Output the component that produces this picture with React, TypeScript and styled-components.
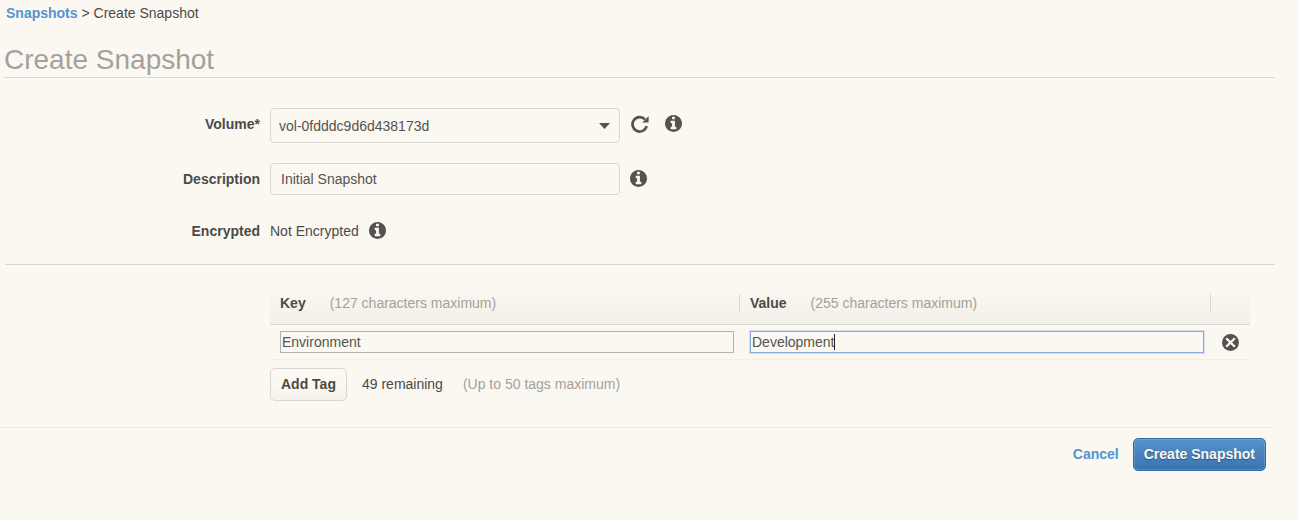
import React, { useEffect, useLayoutEffect, useRef, useState } from "react";
import styled, { createGlobalStyle, css } from "styled-components";

const color = {
  page: "#fbf8f1",
  text: "#545350",
  strong: "#4b4a47",
  muted: "#a3a19b",
  line: "#dad7d0",
  faint: "#f0ede6",
  link: "#5294d2",
};

const GlobalStyle = createGlobalStyle`
  *, *::before, *::after { box-sizing: border-box; }
  body {
    margin: 0;
    background: ${color.page};
    color: ${color.strong};
    font: 14px/18px "Liberation Sans", Arial, sans-serif;
  }
  button, input, select { font: inherit; color: inherit; }
`;

const Page = styled.div`
  padding-right: 23px;
`;

const Section = styled.div`
  padding-left: 5px;
`;

const Breadcrumb = styled.nav`
  padding: 4px 0 0 6px;
`;

const TextLink = styled.a`
  color: ${color.link};
  font-weight: bold;
  text-decoration: none;
`;

const Title = styled.h1`
  margin: 20px 0 0 4px;
  border-bottom: 1px solid ${color.line};
  color: ${color.muted};
  font-size: 28px;
  font-weight: normal;
  line-height: 35px;
`;

const Form = styled.div`
  display: flex;
  flex-direction: column;
  gap: 20px;
  padding: 30px 0 17px;
  border-bottom: 1px solid ${color.line};
`;

const Row = styled.div`
  display: flex;
  align-items: flex-start;
  line-height: 32px;
`;

const labelStyle = css`
  flex: none;
  width: 255px;
  margin-right: 10px;
  font-weight: bold;
  text-align: right;
`;

const Label = styled.label`
  ${labelStyle}
`;

const LabelText = styled.span`
  ${labelStyle}
`;

const SelectBox = styled.div`
  position: relative;
  width: 350px;
`;

const Select = styled.select`
  display: block;
  width: 100%;
  height: 35px;
  padding: 0 30px 0 8px;
  border: 1px solid ${color.line};
  border-radius: 4px;
  background: transparent;
  color: ${color.text};
  appearance: none;
`;

const Arrow = styled.svg`
  position: absolute;
  top: 15px;
  right: 10px;
  pointer-events: none;
`;

const TextInput = styled.input`
  width: 350px;
  height: 32px;
  padding: 0 10px;
  border: 1px solid ${color.line};
  border-radius: 4px;
  background: transparent;
  color: ${color.text};
`;

const IconButton = styled.button<{ $gap?: number }>`
  display: flex;
  align-items: center;
  height: 32px;
  margin: 0 0 0 ${(p) => p.$gap ?? 0}px;
  padding: 0 0 1px;
  border: 0;
  background: none;
  color: ${color.text};
  cursor: pointer;
`;

const TagArea = styled.div`
  padding: 20px 25px 26px 265px;
`;

const Table = styled.table`
  width: 100%;
  table-layout: fixed;
  border-collapse: separate;
  border-spacing: 0;
`;

const ActionCol = styled.col`
  width: 40px;
`;

const HeadCell = styled.th`
  padding: 9px 0 12px;
  border-bottom: 1px solid ${color.line};
  background: linear-gradient(${color.page} 10%, #f2efe8);
  text-align: left;
`;

const HeadText = styled.div<{ $rule?: "left" | "right" }>`
  display: flex;
  gap: 24px;
  height: 18px;
  padding-left: 10px;
  ${(p) => p.$rule && `border-${p.$rule}: 1px solid ${color.line};`}
`;

const Hint = styled.span`
  color: ${color.muted};
  font-weight: normal;
`;

const Cell = styled.td`
  padding: 6px 6px 6px 10px;
  border-bottom: 1px solid ${color.faint};
`;

const ActionCell = styled(Cell)`
  padding-left: 12px;
`;

const TagField = styled.div`
  position: relative;
`;

const TagInput = styled.input`
  display: block;
  width: 100%;
  height: 22px;
  padding: 0 1px;
  border: 1px solid #b5b3ae;
  background: transparent;
  color: ${color.text};
  caret-color: transparent;

  &:focus {
    border-color: #8ba9da;
    outline: 1px solid #cfdff0;
    outline-offset: 0;
  }
`;

const Caret = styled.span`
  position: absolute;
  top: 3px;
  width: 1px;
  height: 16px;
  background: #222;
  pointer-events: none;
`;

const RemoveButton = styled(IconButton)`
  height: 22px;
  padding: 0;
`;

const TagActions = styled.div`
  display: flex;
  align-items: baseline;
  margin-top: 8px;
`;

const Button = styled.button<{ $primary?: boolean }>`
  height: 33px;
  padding: 0 10px 1px;
  border: 1px solid ${color.line};
  border-radius: 5px;
  background: linear-gradient(${color.page} 50%, #f5f2eb);
  font-weight: bold;
  white-space: nowrap;
  cursor: pointer;

  ${(p) =>
    p.$primary &&
    css`
      border-color: #356ba5;
      background: linear-gradient(#5591cb, #3a74b0);
      box-shadow: inset 0 0 0 1px rgba(255, 255, 255, 0.15);
      color: #fbf8f1;
      text-shadow: 0 1px 1px rgba(0, 0, 0, 0.35);
    `}
`;

const Remaining = styled.span`
  margin: 0 20px 0 15px;
`;

const Footer = styled.footer`
  display: flex;
  justify-content: flex-end;
  align-items: baseline;
  gap: 14px;
  padding: 10px 9px 10px 0;
  border-top: 1px solid ${color.faint};
`;

const InfoIcon = () => (
  <svg width="17" height="17" viewBox="128 128 1536 1536" fill="currentColor" aria-hidden="true">
    <path d="M1152 1376v-160q0-14-9-23t-23-9h-96v-512q0-14-9-23t-23-9h-320q-14 0-23 9t-9 23v160q0 14 9 23t23 9h96v320h-96q-14 0-23 9t-9 23v160q0 14 9 23t23 9h448q14 0 23-9t9-23zM1024 480v-160q0-14-9-23t-23-9h-192q-14 0-23 9t-9 23v160q0 14 9 23t23 9h192q14 0 23-9t9-23zM1664 896q0 209-103 385.5t-279.5 279.5-385.5 103-385.5-103-279.5-279.5-103-385.5 103-385.5 279.5-279.5 385.5-103 385.5 103 279.5 279.5 103 385.5z" />
  </svg>
);

const RefreshIcon = () => (
  <svg width="18" height="18" viewBox="0 0 18 18" aria-hidden="true">
    <path d="M15.7 11.2A7.2 7.2 0 1 1 14 4.4" fill="none" stroke="currentColor" strokeWidth="2.7" />
    <path d="M17.6 1.2v6.3h-6.3z" fill="currentColor" />
  </svg>
);

const RemoveIcon = () => (
  <svg width="17" height="17" viewBox="0 0 17 17" aria-hidden="true">
    <circle cx="8.5" cy="8.5" r="8.5" fill="currentColor" />
    <path d="M4.2 4.2l8.6 8.6M12.8 4.2l-8.6 8.6" stroke={color.page} strokeWidth="2.3" />
  </svg>
);

const Info = ({ gap, topic }: { gap: number; topic: string }) => (
  <IconButton type="button" $gap={gap} aria-label={`About ${topic}`}>
    <InfoIcon />
  </IconButton>
);

type TagFieldInputProps = {
  label: string;
  initial: string;
  focusOnMount?: boolean;
};

/* A tag text box whose caret is steady and follows the insertion point. */
function TagFieldInput({ label, initial, focusOnMount }: TagFieldInputProps) {
  const [text, setText] = useState(initial);
  const [focused, setFocused] = useState(false);
  const [position, setPosition] = useState(initial.length);
  const [left, setLeft] = useState(0);
  const ref = useRef<HTMLInputElement>(null);

  useEffect(() => {
    if (!focusOnMount || !ref.current) return;
    ref.current.focus();
    ref.current.setSelectionRange(initial.length, initial.length);
    setFocused(true);
  }, [focusOnMount, initial]);

  useLayoutEffect(() => {
    const context = document.createElement("canvas").getContext("2d");
    if (!context || !ref.current) return;
    const style = getComputedStyle(ref.current);
    context.font = `${style.fontSize} ${style.fontFamily}`;
    const width = context.measureText(text.slice(0, position)).width;
    setLeft(Math.round(width) + 2 - ref.current.scrollLeft);
  }, [text, position]);

  return (
    <TagField>
      <TagInput
        ref={ref}
        aria-label={label}
        value={text}
        onChange={(e) => setText(e.target.value)}
        onSelect={(e) => setPosition(e.currentTarget.selectionEnd ?? 0)}
        onFocus={() => setFocused(true)}
        onBlur={() => setFocused(false)}
      />
      {focused && <Caret style={{ left }} />}
    </TagField>
  );
}

export default function App() {
  const [description, setDescription] = useState("Initial Snapshot");

  return (
    <Page>
      <GlobalStyle />
      <Breadcrumb>
        <TextLink href="#snapshots">Snapshots</TextLink> &gt; Create Snapshot
      </Breadcrumb>
      <Title>Create Snapshot</Title>
      <Section>
        <Form>
          <Row>
            <Label htmlFor="volume">Volume*</Label>
            <SelectBox>
              <Select id="volume">
                <option>vol-0fdddc9d6d438173d</option>
              </Select>
              <Arrow width="11" height="6" viewBox="0 0 11 6" aria-hidden="true">
                <path d="M0 0h11L5.500 6z" fill={color.text} />
              </Arrow>
            </SelectBox>
            <IconButton type="button" $gap={11} aria-label="Refresh volumes">
              <RefreshIcon />
            </IconButton>
            <Info gap={16} topic="volume" />
          </Row>
          <Row>
            <Label htmlFor="description">Description</Label>
            <TextInput
              id="description"
              value={description}
              onChange={(e) => setDescription(e.target.value)}
            />
            <Info gap={10} topic="description" />
          </Row>
          <Row>
            <LabelText>Encrypted</LabelText>
            <span>Not Encrypted</span>
            <Info gap={10} topic="encryption" />
          </Row>
        </Form>
        <TagArea>
          <Table>
            <colgroup>
              <col />
              <col />
              <ActionCol />
            </colgroup>
            <thead>
              <tr>
                <HeadCell scope="col">
                  <HeadText $rule="right">
                    Key <Hint>(127 characters maximum)</Hint>
                  </HeadText>
                </HeadCell>
                <HeadCell scope="col">
                  <HeadText>
                    Value <Hint>(255 characters maximum)</Hint>
                  </HeadText>
                </HeadCell>
                <HeadCell as="td">
                  <HeadText $rule="left" />
                </HeadCell>
              </tr>
            </thead>
            <tbody>
              <tr>
                <Cell>
                  <TagFieldInput label="Key" initial="Environment" />
                </Cell>
                <Cell>
                  <TagFieldInput label="Value" initial="Development" focusOnMount />
                </Cell>
                <ActionCell>
                  <RemoveButton type="button" aria-label="Remove tag">
                    <RemoveIcon />
                  </RemoveButton>
                </ActionCell>
              </tr>
            </tbody>
          </Table>
          <TagActions>
            <Button type="button">Add Tag</Button>
            <Remaining>49 remaining</Remaining>
            <Hint>(Up to 50 tags maximum)</Hint>
          </TagActions>
        </TagArea>
      </Section>
      <Footer>
        <TextLink href="#cancel">Cancel</TextLink>
        <Button type="button" $primary>
          Create Snapshot
        </Button>
      </Footer>
    </Page>
  );
}
